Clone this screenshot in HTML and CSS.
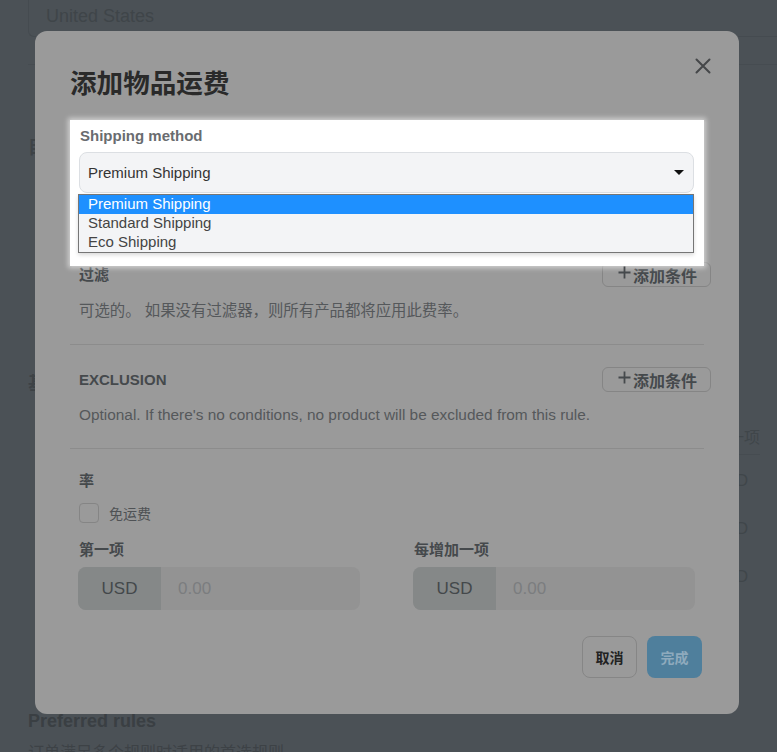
FILE: index.html
```html
<!DOCTYPE html>
<html lang="zh">
<head>
<meta charset="utf-8">
<title>添加物品运费</title>
<link rel="stylesheet" href="styles.css">
</head>
<body>
<div class="bg-page">
  <div class="bg-input">United States</div>
  <div class="bg-rule"></div>
  <div class="bg-heading bg-h1">目的地</div>
  <div class="bg-heading bg-h2">基本费率</div>
  <div class="bg-table">
    <div class="bg-col-head">每增加一项</div>
    <div class="bg-cell">USD</div>
    <div class="bg-cell">USD</div>
    <div class="bg-cell">USD</div>
  </div>
  <div class="bg-pref">Preferred rules</div>
  <div class="bg-pref-sub">订单满足多个规则时适用的首选规则</div>
</div>

<div class="modal">
  <button class="close" aria-label="close">
    <svg width="16" height="16" viewBox="0 0 16 16"><path d="M1.5 1.5 L14.5 14.5 M14.5 1.5 L1.5 14.5" stroke="#454749" stroke-width="2" fill="none" stroke-linecap="round"/></svg>
  </button>
  <h1 class="title">添加物品运费</h1>

  <div class="spot">
    <div class="spot-label">Shipping method</div>
    <div class="select">
      <span>Premium Shipping</span>
      <span class="caret"></span>
    </div>
    <ul class="options">
      <li class="opt opt-sel">Premium Shipping</li>
      <li class="opt">Standard Shipping</li>
      <li class="opt">Eco Shipping</li>
    </ul>
  </div>

  <section class="section section-first">
    <div class="row">
      <div class="label">过滤</div>
      <button class="add"><svg class="plus" width="13" height="13" viewBox="0 0 13 13"><path d="M6.5 0.5 V12.5 M0.5 6.5 H12.5" stroke="#45494c" stroke-width="1.8" fill="none"/></svg><span>添加条件</span></button>
    </div>
    <p class="desc">可选的。 如果没有过滤器，则所有产品都将应用此费率。</p>
  </section>

  <section class="section section-second">
    <div class="row">
      <div class="label">EXCLUSION</div>
      <button class="add"><svg class="plus" width="13" height="13" viewBox="0 0 13 13"><path d="M6.5 0.5 V12.5 M0.5 6.5 H12.5" stroke="#45494c" stroke-width="1.8" fill="none"/></svg><span>添加条件</span></button>
    </div>
    <p class="desc">Optional. If there's no conditions, no product will be excluded from this rule.</p>
  </section>

  <section class="section section-rate">
    <div class="label">率</div>
    <label class="check"><span class="box"></span><span>免运费</span></label>
    <div class="prices">
      <div class="price">
        <div class="label">第一项</div>
        <div class="group"><span class="addon">USD</span><span class="ph">0.00</span></div>
      </div>
      <div class="price">
        <div class="label">每增加一项</div>
        <div class="group"><span class="addon">USD</span><span class="ph">0.00</span></div>
      </div>
    </div>
  </section>

  <div class="footer">
    <button class="btn btn-cancel">取消</button>
    <button class="btn btn-ok">完成</button>
  </div>
</div>
</body>
</html>
```
FILE: styles.css
```css
* { box-sizing: border-box; }
html, body { margin: 0; padding: 0; }
body {
  width: 777px;
  height: 752px;
  overflow: hidden;
  background: #4b5156;
  font-family: "Liberation Sans", Arial, "Noto Sans CJK SC", sans-serif;
  position: relative;
}

/* dimmed background page */
.bg-page {
  padding-left: 28px;
  color: #3d4246;
}
.bg-input {
  height: 37px;
  border: 1px solid #454b50;
  border-top: none;
  border-right: none;
  border-radius: 0 0 0 6px;
  padding: 6px 0 0 17px;
  font-size: 18px;
  color: #3f4549;
}
.bg-rule {
  height: 1px;
  margin-top: 27px;
  background: #464c51;
}
.bg-heading {
  font-size: 18px;
  font-weight: bold;
}
.bg-h1 { margin-top: 68px; }
.bg-h2 { margin-top: 210px; }
.bg-table {
  display: flex;
  flex-direction: column;
  align-items: flex-end;
  padding-right: 17px;
  margin-top: 29px;
  font-size: 16px;
  color: #40464a;
}
.bg-col-head {
  padding-bottom: 6px;
  border-bottom: 1px solid #464c51;
  width: 120px;
  text-align: right;
}
.bg-cell {
  margin-top: 26px;
  padding-right: 12px;
  height: 22px;
}
.bg-col-head + .bg-cell { margin-top: 17px; }
.bg-pref {
  margin-top: 121px;
  font-size: 18px;
  font-weight: bold;
  color: #3a3f43;
}
.bg-pref-sub {
  margin-top: 7px;
  font-size: 16px;
  color: #3d4246;
}

/* modal */
.modal {
  position: absolute;
  left: 35px;
  top: 31px;
  width: 704px;
  height: 683px;
  background: #9a9a9a;
  border-radius: 12px;
  padding: 34px 35px 36px;
  color: #43474a;
}
.close {
  position: absolute;
  right: 28px;
  top: 27px;
  width: 16px;
  height: 16px;
  padding: 0;
  border: none;
  background: none;
  display: block;
}
.close svg { display: block; }
.title {
  margin: 0;
  font-size: 26.6px;
  line-height: 34px;
  font-weight: bold;
  color: #2a2a2a;
  font-family: "Noto Sans CJK SC", sans-serif;
}

/* highlighted spot */
.spot {
  position: relative;
  margin-top: 21px;
  background: #ffffff;
  padding: 7px 10px 13px 9px;
  box-shadow: 0 0 5px 2px rgba(255, 255, 255, 0.55);
}
.spot-label {
  font-size: 15px;
  line-height: 18px;
  font-weight: bold;
  color: #696c6f;
  padding-left: 1px;
}
.select {
  margin-top: 7px;
  height: 41px;
  border: 1px solid #dcdfe3;
  border-radius: 8px;
  background: #f3f4f6;
  display: flex;
  align-items: center;
  justify-content: space-between;
  padding: 0 9px 0 8px;
  font-size: 15px;
  color: #333;
}
.caret {
  width: 0;
  height: 0;
  border-left: 5px solid transparent;
  border-right: 5px solid transparent;
  border-top: 5px solid #111;
}
.options {
  list-style: none;
  margin: 1px 0 0 -1px;
  padding: 0;
  border: 1px solid #767676;
  background: #f3f4f6;
  box-shadow: 0 2px 4px rgba(0, 0, 0, 0.15);
}
.opt {
  height: 19px;
  line-height: 18px;
  padding-left: 9px;
  font-size: 15px;
  color: #444;
}
.opt-sel {
  background: #1e90ff;
  color: #fff;
}

/* sections */
.section {
  padding: 23px 0 22px 9px;
  border-bottom: 1px solid #8c8c8c;
}
.section-first {
  padding-top: 0;
  margin-top: -4px;
}
.section-first .desc { margin-top: 13px; }
.section-second {
  padding-top: 22px;
  padding-bottom: 22px;
}
.section-second .desc { margin-top: 12px; }
.section-rate {
  border-bottom: none;
  padding-bottom: 0;
}
.row {
  display: flex;
  align-items: center;
  justify-content: space-between;
  height: 25px;
  margin-right: -7px;
}
.label {
  font-size: 15px;
  line-height: 18px;
  font-weight: bold;
  color: #45494c;
}
.add {
  height: 25px;
  width: 109px;
  border: 1px solid #858585;
  border-radius: 6px;
  background: transparent;
  font-family: "Noto Sans CJK SC", sans-serif;
  font-size: 16px;
  font-weight: bold;
  color: #45494c;
  display: flex;
  align-items: center;
  justify-content: center;
  gap: 2px;
  padding: 0 0 0 2px;
  line-height: 1;
}
.plus {
  display: block;
  position: relative;
  top: -2px;
}
.desc {
  margin: 11px 0 0;
  font-size: 15.4px;
  line-height: 22px;
  color: #55585b;
}

.check {
  display: flex;
  align-items: center;
  gap: 10px;
  margin-top: 13px;
  font-size: 14px;
  color: #4f5255;
}
.box {
  width: 20px;
  height: 20px;
  border: 1px solid #858585;
  border-radius: 4px;
}
.prices {
  display: grid;
  grid-template-columns: 282px 282px;
  column-gap: 53px;
  margin-top: 18px;
  margin-left: -1px;
}
.price .label { margin-left: 1px; }
.group {
  margin-top: 8px;
  height: 43px;
  display: flex;
  border-radius: 8px;
  overflow: hidden;
  background: #939393;
}
.addon {
  width: 83px;
  background: #858888;
  display: flex;
  align-items: center;
  justify-content: center;
  font-size: 17px;
  color: #44484b;
}
.ph {
  display: flex;
  align-items: center;
  padding-left: 17px;
  font-size: 17px;
  color: #7b7d7f;
}

.footer {
  display: flex;
  justify-content: flex-end;
  gap: 10px;
  margin-top: 26px;
  margin-right: 2px;
}
.btn {
  width: 55px;
  height: 42px;
  border-radius: 8px;
  font-family: "Noto Sans CJK SC", sans-serif;
  font-size: 14px;
  font-weight: bold;
  padding: 0;
}
.btn-cancel {
  background: transparent;
  border: 1px solid #868686;
  color: #222;
}
.btn-ok {
  background: #4f7f9c;
  border: none;
  color: #8eaabd;
}
```
